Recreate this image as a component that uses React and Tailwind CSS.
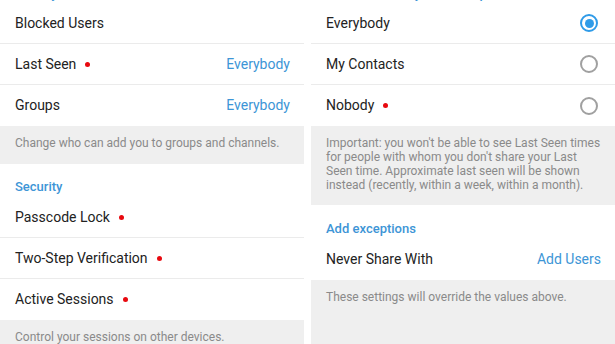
import React from 'react';

const Dot = () => <span className="ml-[9px] inline-block h-[5px] w-[5px] rounded-full bg-[#e8090f]" />;

function Row({ label, value, dot, divider = true, className = 'pr-[14px]', children }) {
    return (
        <div className={`flex h-[41px] items-center justify-between pl-[15px] ${className} ${divider ? 'border-b border-[#ebebeb]' : ''}`}>
            <span className="flex items-center text-[14px] text-[#222]">
                {label}
                {dot && <Dot />}
            </span>
            {value && <span className="text-[14px] text-[#3d95d6]">{value}</span>}
            {children}
        </div>
    );
}

function Radio({ checked }) {
    return checked ? (
        <span className="flex h-[18px] w-[18px] items-center justify-center rounded-full border-2 border-[#2f9be8]">
            <span className="h-[9px] w-[9px] rounded-full bg-[#2f9be8]" />
        </span>
    ) : (
        <span className="h-[18px] w-[18px] rounded-full border-2 border-[#a0a0a0]" />
    );
}

function Header({ children, className = '' }) {
    return (
        <div className={`flex items-end pl-[15px] text-[13px] font-medium text-[#3d95d6] ${className}`}>
            {children}
        </div>
    );
}

function Note({ children, className = '' }) {
    return (
        <div className={`bg-[#efefef] pl-[15px] pr-[12px] text-[12px] leading-[14px] text-[#8a8a8a] ${className}`}>
            {children}
        </div>
    );
}

export default function App() {
    return (
        <div className="flex h-[344px] w-[615px] gap-[7px] overflow-hidden bg-white" style={{ fontFamily: 'Roboto, sans-serif' }}>
            {/* left: privacy and security */}
            <div className="flex w-[304px] shrink-0 flex-col">
                <Header className="-mt-[29px] h-[32px]">Privacy</Header>
                <Row label="Blocked Users" />
                <Row label="Last Seen" dot value="Everybody" />
                <Row label="Groups" value="Everybody" divider={false} />
                <Note className="h-[38px] pt-[10px]">Change who can add you to groups and channels.</Note>
                <Header className="h-[33px] pb-[1px]">Security</Header>
                <Row label="Passcode Lock" dot />
                <Row label="Two-Step Verification" dot />
                <Row label="Active Sessions" dot divider={false} />
                <Note className="flex-1 pt-[10px]">Control your sessions on other devices.</Note>
            </div>

            {/* right: last seen */}
            <div className="flex flex-1 flex-col">
                <Header className="-mt-[29px] h-[32px]">Who can see my timestamp</Header>
                <Row label="Everybody" className="pr-[17px]">
                    <Radio checked />
                </Row>
                <Row label="My Contacts" className="pr-[17px]">
                    <Radio />
                </Row>
                <Row label="Nobody" dot divider={false} className="pr-[17px]">
                    <Radio />
                </Row>
                <Note className="h-[79px] pt-[10px]">
                    Important: you won't be able to see Last Seen times for people with whom you don't share your Last Seen time. Approximate last seen will be shown instead (recently, within a week, within a month).
                </Note>
                <Header className="h-[34px] pb-[1px]">Add exceptions</Header>
                <Row label="Never Share With" value="Add Users" divider={false} />
                <Note className="flex-1 pt-[10px]">These settings will override the values above.</Note>
            </div>
        </div>
    );
}
